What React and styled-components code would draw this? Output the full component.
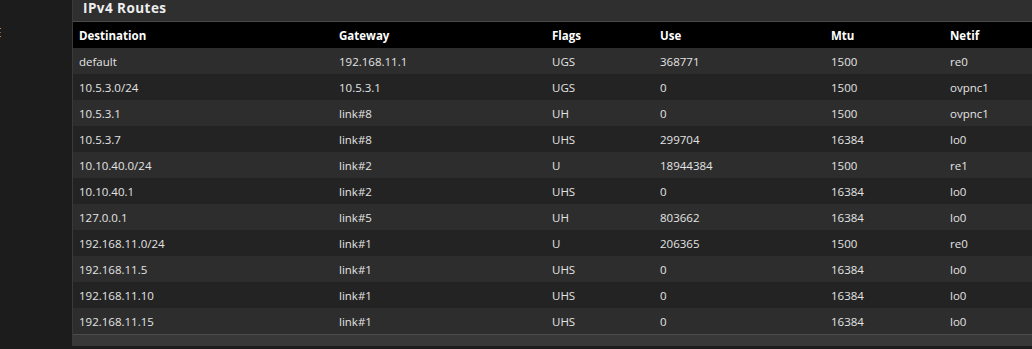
import React from "react";
import styled, { createGlobalStyle } from "styled-components";

const Global = createGlobalStyle`
  html, body { margin: 0; padding: 0; background: #1c1c1c; overflow: hidden; }
  body { font-family: "Open Sans", "Noto Sans", sans-serif; }
`;

const Page = styled.div`
  display: flex;
  align-items: flex-start;
  height: 349px;
  width: 100%;
`;

const Sidebar = styled.div`
  width: 72px;
  flex: none;
  height: 100%;
  overflow: hidden;
  background: #1c1c1c;
`;

const SideLabel = styled.div`
  margin: 24px 0 0 -6px;
  color: #e6e6e6;
  font-size: 13px;
  line-height: 16px;
`;

const Panel = styled.section`
  flex: 1;
  min-width: 0;
  background: #383838;
  border-left: 1px solid #3a3a3a;
  padding-bottom: 11px;
`;

const TitleBar = styled.div`
  height: 21px;
  background: #2f2f2f;
  border-bottom: 1px solid #4a4a4a;
  padding-left: 10px;
  display: flex;
  align-items: flex-start;
`;

const Title = styled.h2`
  margin: 0;
  margin-top: -2px;
  font-size: 13.5px;
  line-height: 20px;
  font-weight: 700;
  letter-spacing: 0.45px;
  color: #eeeeee;
`;

const Table = styled.table`
  width: 100%;
  border-collapse: collapse;
  table-layout: fixed;
  font-size: 11.5px;
  border-bottom: 1px solid #4c4c4c;
`;

const HeadCell = styled.th`
  height: 26px;
  padding: 0 6px;
  text-align: left;
  font-weight: 700;
  color: #ffffff;
  background: #000000;
`;

const Row = styled.tr`
  background: ${(p) => (p.$odd ? "#232323" : "#2d2d2d")};
`;

const Cell = styled.td`
  height: 26px;
  padding: 0 6px;
  color: #e4e4e4;
  white-space: nowrap;
`;

const cols = [260, 213, 108, 171, 119];
const headers = ["Destination", "Gateway", "Flags", "Use", "Mtu", "Netif"];

const routes = [
  ["default", "192.168.11.1", "UGS", "368771", "1500", "re0"],
  ["10.5.3.0/24", "10.5.3.1", "UGS", "0", "1500", "ovpnc1"],
  ["10.5.3.1", "link#8", "UH", "0", "1500", "ovpnc1"],
  ["10.5.3.7", "link#8", "UHS", "299704", "16384", "lo0"],
  ["10.10.40.0/24", "link#2", "U", "18944384", "1500", "re1"],
  ["10.10.40.1", "link#2", "UHS", "0", "16384", "lo0"],
  ["127.0.0.1", "link#5", "UH", "803662", "16384", "lo0"],
  ["192.168.11.0/24", "link#1", "U", "206365", "1500", "re0"],
  ["192.168.11.5", "link#1", "UHS", "0", "16384", "lo0"],
  ["192.168.11.10", "link#1", "UHS", "0", "16384", "lo0"],
  ["192.168.11.15", "link#1", "UHS", "0", "16384", "lo0"],
];

export default function App() {
  return (
    <>
      <Global />
      <Page>
        <Sidebar>
          <SideLabel>E</SideLabel>
        </Sidebar>
        <Panel>
          <TitleBar>
            <Title>IPv4 Routes</Title>
          </TitleBar>
          <Table>
            <colgroup>
              {cols.map((w, i) => (
                <col key={i} style={{ width: w }} />
              ))}
              <col />
            </colgroup>
            <thead>
              <tr>
                {headers.map((h) => (
                  <HeadCell key={h}>{h}</HeadCell>
                ))}
              </tr>
            </thead>
            <tbody>
              {routes.map((r, i) => (
                <Row key={i} $odd={i % 2 === 1}>
                  {r.map((c, j) => (
                    <Cell key={j}>{c}</Cell>
                  ))}
                </Row>
              ))}
            </tbody>
          </Table>
        </Panel>
      </Page>
    </>
  );
}
